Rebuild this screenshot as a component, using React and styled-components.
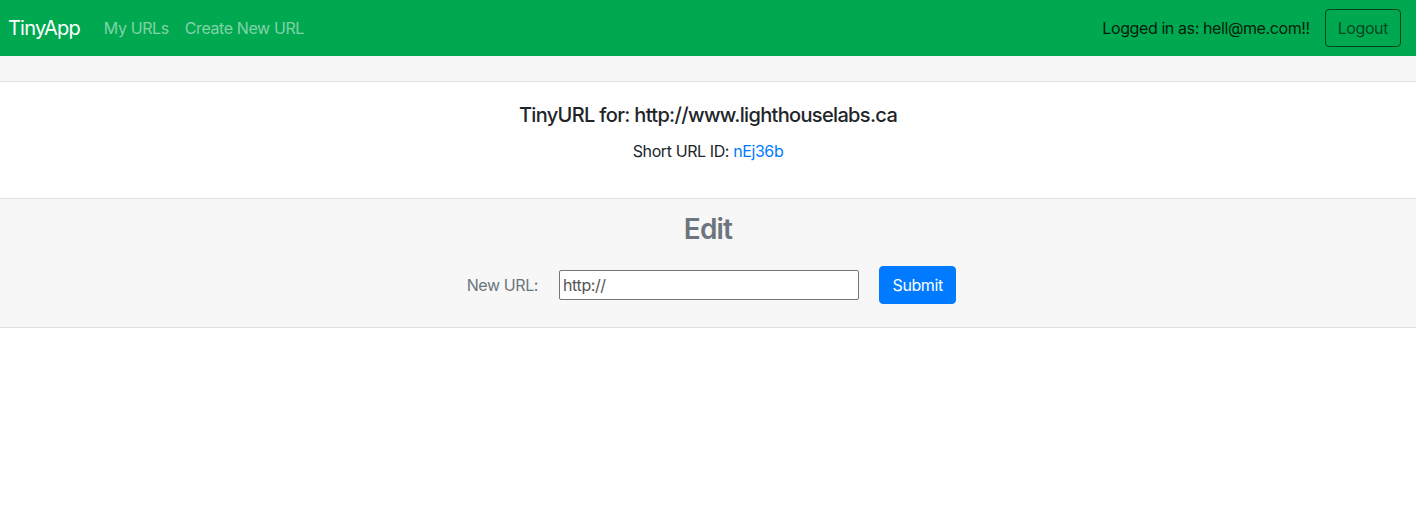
import React from "react";
import styled, { createGlobalStyle } from "styled-components";

const Global = createGlobalStyle`
  * { box-sizing: border-box; }
  html, body { margin: 0; padding: 0; background: #fff; }
  body {
    font-family: Inter, "Noto Sans", "Liberation Sans", sans-serif;
    font-size: 16px;
    line-height: 1.5;
    color: #212529;
    letter-spacing: -0.025em;
  }
`;

const Navbar = styled.nav`
  display: flex;
  align-items: center;
  justify-content: space-between;
  height: 56px;
  padding: 0 15px 0 8px;
  background: #00a84f;
`;

const NavLeft = styled.div`
  display: flex;
  align-items: center;
`;

const Brand = styled.a`
  font-size: 20px;
  color: #fff;
  margin-right: 16px;
  text-decoration: none;
  line-height: 30px;
  letter-spacing: -0.04em;
`;

const NavLink = styled.a`
  padding: 8px;
  color: rgba(255, 255, 255, 0.5);
  text-decoration: none;
`;

const NavRight = styled.div`
  display: flex;
  align-items: center;
  gap: 15px;
`;

const UserText = styled.span`
  color: rgba(0, 0, 0, 0.85);
`;

const OutlineButton = styled.button`
  font: inherit;
  letter-spacing: inherit;
  height: 38px;
  padding: 0 12px;
  color: rgba(0, 0, 0, 0.6);
  background: transparent;
  border: 1px solid rgba(0, 0, 0, 0.6);
  border-radius: 4px;
`;

const Card = styled.section`
  display: flex;
  flex-direction: column;
`;

const CardHeader = styled.div`
  height: 26px;
  background: #f7f7f7;
  border-bottom: 1px solid #dfdfdf;
`;

const CardBody = styled.div`
  padding: 21px 20px 20px;
  text-align: center;
`;

const Title = styled.h5`
  margin: 0 0 12px;
  font-size: 20px;
  font-weight: 500;
  line-height: 1.2;
  letter-spacing: -0.033em;
`;

const Text = styled.p`
  margin: 0 0 15px;
`;

const Link = styled.a`
  color: #007bff;
  text-decoration: none;
`;

const CardFooter = styled.div`
  background: #f7f7f7;
  border-top: 1px solid #dfdfdf;
  border-bottom: 1px solid #dfdfdf;
  padding: 14px 20px 23px;
  text-align: center;
`;

const EditHeading = styled.h3`
  margin: 0 0 19px;
  font-size: 28px;
  font-weight: 600;
  line-height: 1.2;
  color: #6c757d;
  letter-spacing: -0.03em;
`;

const FormRow = styled.form`
  display: flex;
  align-items: center;
  justify-content: center;
  padding-left: 7px;
`;

const Label = styled.label`
  color: #6c757d;
  margin-right: 21px;
`;

const Input = styled.input`
  width: 300px;
  height: 30px;
  padding: 1px 3px;
  font-family: inherit;
  letter-spacing: inherit;
  font-size: 16px;
  color: #555;
  border: 1px solid #767676;
  border-radius: 2px;
  background: #fff;
  margin-right: 20px;
`;

const PrimaryButton = styled.button`
  font: inherit;
  letter-spacing: inherit;
  height: 38px;
  padding: 0 12.5px;
  color: #fff;
  background: #007bff;
  border: 1px solid #007bff;
  border-radius: 4px;
`;

export default function App() {
  return (
    <>
      <Global />
      <Navbar>
        <NavLeft>
          <Brand href="#">TinyApp</Brand>
          <NavLink href="#">My URLs</NavLink>
          <NavLink href="#">Create New URL</NavLink>
        </NavLeft>
        <NavRight>
          <UserText>Logged in as: hell@me.com!!</UserText>
          <OutlineButton type="button">Logout</OutlineButton>
        </NavRight>
      </Navbar>
      <Card>
        <CardHeader />
        <CardBody>
          <Title>TinyURL for: http://www.lighthouselabs.ca</Title>
          <Text>
            Short URL ID: <Link href="#">nEj36b</Link>
          </Text>
        </CardBody>
        <CardFooter>
          <EditHeading>Edit</EditHeading>
          <FormRow onSubmit={(e) => e.preventDefault()}>
            <Label htmlFor="newurl">New URL:</Label>
            <Input id="newurl" type="text" defaultValue="http://" />
            <PrimaryButton type="submit">Submit</PrimaryButton>
          </FormRow>
        </CardFooter>
      </Card>
    </>
  );
}
